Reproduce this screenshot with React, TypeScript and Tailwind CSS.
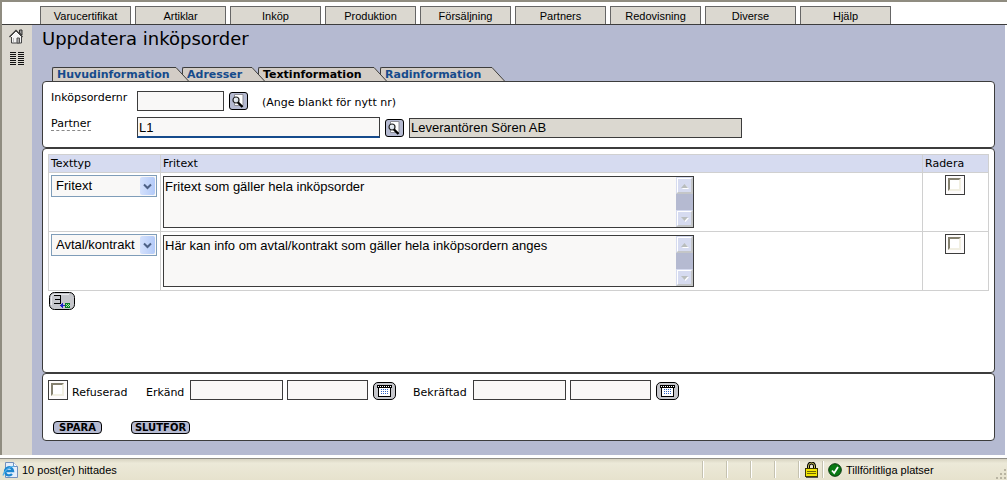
import { useState } from "react";
import type { ReactNode } from "react";
import clsx from "clsx";

const MENU = [
  "Varucertifikat",
  "Artiklar",
  "Inköp",
  "Produktion",
  "Försäljning",
  "Partners",
  "Redovisning",
  "Diverse",
  "Hjälp",
];

// earlier tabs lie over the left edge of the next one
const TABS = [
  { label: "Huvudinformation", className: "z-40 w-[124px]" },
  { label: "Adresser", className: "z-30 w-[70px]" },
  { label: "Textinformation", className: "z-20 w-[116px]" },
  { label: "Radinformation", className: "z-10 w-[112px]" },
];

const TEXT_TYPES = ["Fritext", "Avtal/kontrakt"];

const ROWS = [
  { id: 1, type: "Fritext", text: "Fritext som gäller hela inköpsorder" },
  {
    id: 2,
    type: "Avtal/kontrakt",
    text: "Här kan info om avtal/kontrakt som gäller hela inköpsordern anges",
  },
];

export default function App() {
  return (
    <div className="flex min-h-screen flex-col border-l-2 border-[#8f8c80] bg-white font-['DejaVu_Sans',Verdana,sans-serif] text-[11px] leading-[14px] text-black">
      <MenuBar />
      <div className="mr-[2px] flex flex-1">
        <Sidebar />
        <main className="flex flex-1 flex-col bg-[#b5bad1] px-[10px] pt-[2px] pb-[14px]">
          <h1 className="text-[18px] leading-[24px]">Uppdatera inköpsorder</h1>
          <Tabs />
          <OrderPanel />
          <TextPanel />
          <ConfirmPanel />
        </main>
      </div>
      <StatusBar />
    </div>
  );
}

function MenuBar() {
  return (
    <nav className="flex gap-1 border-t-2 border-b border-t-[#8f8c80] border-b-[#3c3c3c] pt-1 pl-[38px] font-['Liberation_Sans',Arial,sans-serif]">
      {MENU.map((item) => (
        <button
          key={item}
          type="button"
          className="h-[18px] w-[91px] border border-b-0 border-[#666] bg-[#dbd8d0] text-center leading-[18px]"
        >
          {item}
        </button>
      ))}
    </nav>
  );
}

function Sidebar() {
  return (
    <aside className="flex w-[30px] flex-col items-center gap-2 bg-[#dbd8d0] pt-1 pr-[2px]">
      <button type="button" aria-label="Hem">
        <HomeIcon />
      </button>
      <button type="button" aria-label="Lista">
        <ListIcon />
      </button>
    </aside>
  );
}

function Tabs() {
  const [active, setActive] = useState("Textinformation");

  return (
    <div role="tablist" className="mt-4 flex pl-[10px]">
      {TABS.map((tab) => (
        <button
          key={tab.label}
          type="button"
          role="tab"
          aria-selected={tab.label === active}
          onClick={() => setActive(tab.label)}
          className={clsx(
            "relative -mr-[7px] box-content flex h-[14px] pr-[13px] font-bold",
            tab.className,
            tab.label === active ? "text-black" : "text-[#164b8c]"
          )}
        >
          <span className="h-[14px] flex-1 rounded-tl-[2px] border-t border-l border-[#3c3c3c] bg-[#d3cdc6] pl-1 text-left whitespace-nowrap">
            {tab.label}
          </span>
          <svg className="-mr-[13px] shrink-0" width="14" height="14" viewBox="0 0 14 14">
            <path d="M0 0h1L14 14H0z" fill="#d3cdc6" />
            <path d="M0 .5h1L13.5 14" fill="none" stroke="#3c3c3c" />
          </svg>
        </button>
      ))}
    </div>
  );
}

function Panel({ className, children }: { className?: string; children: ReactNode }) {
  return (
    <section className={clsx("rounded-[4px] border border-[#3c3c3c] bg-white", className)}>
      {children}
    </section>
  );
}

function OrderPanel() {
  return (
    <Panel className="grid grid-cols-[86px_1fr] gap-y-[6px] px-2 py-[9px]">
      <label htmlFor="order-no">Inköpsordernr</label>
      <div className="flex items-center">
        <Field id="order-no" className="w-[87px]" />
        <SearchButton label="Sök inköpsorder" />
        <span className="mt-1 ml-[14px]">(Ange blankt för nytt nr)</span>
      </div>
      <label htmlFor="partner">
        <span className="border-b border-dashed border-[#888]">Partner</span>
      </label>
      <div className="flex items-center">
        <input
          id="partner"
          defaultValue="L1"
          className="h-[21px] w-[243px] border border-b-2 border-[#3c3c3c] border-b-[#164b8c] bg-[#f9f8f7] px-px font-['Liberation_Sans',Arial,sans-serif] text-[13px]"
        />
        <SearchButton label="Sök partner" />
        <input
          readOnly
          aria-label="Partnernamn"
          defaultValue="Leverantören Sören AB"
          className="ml-[5px] h-[20px] w-[333px] border border-[#3c3c3c] bg-[#dbd8d0] px-px font-['Liberation_Sans',Arial,sans-serif] text-[13px]"
        />
      </div>
    </Panel>
  );
}

function TextPanel() {
  return (
    <Panel className="flex-1 px-[5px] pt-[5px] pb-4">
      <table className="w-full border-collapse">
        <thead>
          <tr className="h-[18px] bg-[#d6dbf0] text-left">
            <th className="w-[112px] border border-[#d0d0d0] px-[2px] py-px font-normal">Texttyp</th>
            <th className="border border-[#d0d0d0] px-[2px] py-px font-normal">Fritext</th>
            <th className="w-[66px] border border-[#d0d0d0] px-[2px] py-px font-normal">Radera</th>
          </tr>
        </thead>
        <tbody>
          {ROWS.map((row) => (
            <tr key={row.id} className="h-[59px] align-top">
              <td className="border border-[#d0d0d0] px-[2px] pt-[2px]">
                <TypeSelect value={row.type} />
              </td>
              <td className="border border-[#d0d0d0] px-[2px] pt-[3px]">
                <TextBox value={row.text} />
              </td>
              <td className="border border-[#d0d0d0] pt-[2px] pr-[2px]">
                <div className="flex justify-center">
                  <Checkbox label={`Radera rad ${row.id}`} />
                </div>
              </td>
            </tr>
          ))}
        </tbody>
      </table>
      <button type="button" aria-label="Lägg till rad" className="mt-px ml-px block">
        <AddRowIcon />
      </button>
    </Panel>
  );
}

function ConfirmPanel() {
  return (
    <Panel className="py-[6px] pr-2 pl-[5px]">
      <div className="flex h-5 items-end">
        <Checkbox id="refused" />
        <label htmlFor="refused" className="ml-1 w-[74px]">
          Refuserad
        </label>
        <label htmlFor="approved" className="w-[44px]">
          Erkänd
        </label>
        <Field id="approved" className="w-[93px]" />
        <Field label="Erkänd tid" className="ml-1 w-[81px]" />
        <CalendarButton label="Välj datum för erkänd" />
        <label htmlFor="confirmed" className="ml-[17px] w-[60px]">
          Bekräftad
        </label>
        <Field id="confirmed" className="w-[93px]" />
        <Field label="Bekräftad tid" className="ml-1 w-[81px]" />
        <CalendarButton label="Välj datum för bekräftad" />
      </div>
      <div className="mt-[21px] flex gap-[29px] pl-[5px]">
        <ActionButton className="w-[49px]">SPARA</ActionButton>
        <ActionButton className="w-[59px]">SLUTFÖR</ActionButton>
      </div>
    </Panel>
  );
}

function Field({ id, label, className }: { id?: string; label?: string; className: string }) {
  return (
    <input
      id={id}
      aria-label={label}
      className={clsx("h-5 border border-[#3c3c3c] bg-[#f9f8f7] px-px", className)}
    />
  );
}

function Checkbox({ id, label }: { id?: string; label?: string }) {
  return (
    <span className="flex size-5 shrink-0 border border-[#3c3c3c] bg-[#fdfbfb] pt-[2px] pl-[2px]">
      <input
        id={id}
        type="checkbox"
        aria-label={label}
        className="size-[13px] appearance-none border-2 border-t-[#85816f] border-r-[#f1efe2] border-b-[#f1efe2] border-l-[#85816f] bg-white checked:bg-[#3c3c3c]"
      />
    </span>
  );
}

function TypeSelect({ value }: { value: string }) {
  return (
    <div className="relative w-[106px]">
      <select
        aria-label="Texttyp"
        defaultValue={value}
        className="block h-[22px] w-full appearance-none border border-[#7f9db9] bg-[#f9f8f7] pl-1 font-['Liberation_Sans',Arial,sans-serif] text-[13px]"
      >
        {TEXT_TYPES.map((type) => (
          <option key={type}>{type}</option>
        ))}
      </select>
      <span className="pointer-events-none absolute top-[2px] right-[2px] flex h-[18px] w-[15px] items-center justify-center rounded-[2px] bg-linear-to-r from-[#d4e1fc] to-[#b3caf8]">
        <svg width="9" height="7" viewBox="0 0 9 7">
          <path d="M1 1.5l3.5 3.5L8 1.5" fill="none" stroke="#4d6185" strokeWidth="2" />
        </svg>
      </span>
    </div>
  );
}

function TextBox({ value }: { value: string }) {
  return (
    <div className="flex h-[52px] w-[531px] border border-[#3c3c3c]">
      <textarea
        aria-label="Fritext"
        defaultValue={value}
        className="h-full flex-1 resize-none overflow-hidden bg-[#f9f8f7] px-px pt-[2px] font-['Liberation_Sans',Arial,sans-serif] text-[13px] leading-[15px]"
      />
      <div className="flex w-[17px] flex-col justify-between bg-[#b5bad1]">
        <ScrollArrow points="3,9 10,9 6.5,5" />
        <ScrollArrow points="3,5 10,5 6.5,9" />
      </div>
    </div>
  );
}

function ScrollArrow({ points }: { points: string }) {
  return (
    <span className="flex size-[17px] border border-t-[#d6dbf0] border-r-[#c4c6c8] border-b-[#c4c6c8] border-l-[#d6dbf0]">
      <svg
        className="border border-t-white border-r-[#c4c6c8] border-b-[#c4c6c8] border-l-white bg-[#d6dbf0]"
        width="15"
        height="15"
        viewBox="0 0 13 13"
      >
        <polygon points={points} transform="translate(1 1)" fill="#fff" />
        <polygon points={points} fill="#b9bdbd" />
      </svg>
    </span>
  );
}

function SearchButton({ label }: { label: string }) {
  return (
    <button
      type="button"
      aria-label={label}
      className="ml-[5px] flex h-[18px] w-[19px] items-center justify-center rounded-[3px] border border-black bg-[#b5bad1]"
    >
      <svg width="17" height="16" viewBox="0 0 17 16">
        <path d="M4.5 1.500h8.500v11H4.500z" fill="#fff" stroke="#8c8c94" />
        <circle cx="6" cy="7" r="3" fill="#dfe6ee" stroke="#222" strokeWidth="1.200" />
        <path d="M8 9.500l4.500 4.500" stroke="#000" strokeWidth="2.400" />
        <path d="M4.500 7l1.500-1.500" stroke="#fff" />
      </svg>
    </button>
  );
}

function CalendarButton({ label }: { label: string }) {
  return (
    <button
      type="button"
      aria-label={label}
      className="ml-[5px] flex h-[18px] w-[23px] items-center justify-center rounded-[5px] border border-black bg-[#c6c7cc]"
    >
      <svg width="15" height="12" viewBox="0 0 15 12" shapeRendering="crispEdges">
        <path d="M0 0h15v3H0z" fill="#000" />
        <path d="M1 1.500h13" stroke="#fff" strokeDasharray="1 1" />
        <path d="M1 3h13v9H1z" fill="#000" />
        <path d="M2 3h11v8H2z" fill="#fff" />
        <path d="M4 4.500h8M4 6.500h8M4 8.500h8" stroke="#2f62c4" strokeDasharray="1 1" />
      </svg>
    </button>
  );
}

function ActionButton({ className, children }: { className: string; children: ReactNode }) {
  return (
    <button
      type="button"
      className={clsx(
        "h-[13px] rounded-[4px] border border-black bg-[#b5bad1] text-center text-[10px] leading-[11px] font-bold",
        className
      )}
    >
      {children}
    </button>
  );
}

function AddRowIcon() {
  return (
    <svg width="26" height="18" viewBox="0 0 26 18">
      <rect x=".5" y=".5" width="25" height="17" rx="5" fill="#c6c7cc" stroke="#000" />
      <path d="M2.500 13V5q0-2.500 2.500-2.500h15" fill="none" stroke="#e8e8ec" />
      <g shapeRendering="crispEdges">
        <path d="M5 3.500h7M6 7.500h6M5 11.500h7M11.500 3v9" fill="none" stroke="#000" />
        <path d="M11 13.500h5" stroke="#2020c8" />
        <path d="M13.500 11v5" stroke="#2020c8" />
        <path d="M12.500 12v3" stroke="#2020c8" />
        <path d="M16 11h5v5h-5z" fill="#0b7a26" />
        <path d="M17 12.500h3M18 13.500h3M17 14.500h3" stroke="#a5f0a5" strokeDasharray="1 1" />
      </g>
    </svg>
  );
}

function HomeIcon() {
  return (
    <svg width="15" height="15" viewBox="0 0 15 15">
      <path d="M10.500 1h2.500v5l-2.500-2z" fill="#999" stroke="#333" />
      <path d="M2.500 7.500L7 3l5.500 5v6h-10z" fill="#f4f4f4" stroke="#444" />
      <path d="M.5 8L7 1.500 13.500 8" fill="none" stroke="#333" strokeWidth="1.400" />
      <path d="M2 8L7 3l5 5" fill="none" stroke="#fff" />
      <path d="M8 9h2.500v5H8z" fill="#aaa" stroke="#555" />
      <path d="M4.500 9v4" stroke="#bbb" />
    </svg>
  );
}

function ListIcon() {
  return (
    <svg width="15" height="13" viewBox="0 0 15 13" shapeRendering="crispEdges">
      <path d="M3.500 0v13M11.500 0v13" stroke="#111" strokeWidth="6" strokeDasharray="1 1" />
    </svg>
  );
}

function StatusBar() {
  return (
    <footer className="-ml-[2px] flex h-[25px] items-stretch border-t-[3px] border-white font-['Liberation_Sans',Tahoma,sans-serif]">
      <div className="flex flex-1 items-stretch border-t border-[#8f8d86] bg-linear-to-b from-[#d8d4c2] via-[#ece9d8] via-20% to-[#e6e2cd]">
        <div className="flex flex-1 items-center gap-1 pl-[2px]">
          <BrowserIcon />
          <span>10 post(er) hittades</span>
        </div>
        {[0, 1, 2, 3].map((n) => (
          <StatusDivider key={n} className="w-6" />
        ))}
        <StatusDivider className="w-6">
          <LockIcon />
        </StatusDivider>
        <StatusDivider className="w-[185px] gap-1">
          <TrustedIcon />
          <span className="flex-1">Tillförlitliga platser</span>
          <ResizeGrip />
        </StatusDivider>
      </div>
    </footer>
  );
}

function StatusDivider({ className, children }: { className: string; children?: ReactNode }) {
  return (
    <div className={clsx("flex items-center", className)}>
      <span className="h-[17px] w-[2px] shrink-0 border-l border-[#c5c2b0] bg-white" />
      {children}
    </div>
  );
}

function BrowserIcon() {
  return (
    <svg width="16" height="16" viewBox="0 0 16 16">
      <path d="M3.500.5h8l4 4v11h-12z" fill="#e4eefb" stroke="#7391bd" />
      <path d="M11.500.5v4h4" fill="#fff" stroke="#7391bd" />
      <path d="M3 9h8a4 4 0 1 0-1 3" fill="none" stroke="#1c86cf" strokeWidth="2.400" />
      <path d="M1 13.500C2 9 7 4.500 12.500 4" fill="none" stroke="#4db0ea" strokeWidth="1.200" />
    </svg>
  );
}

function LockIcon() {
  return (
    <svg className="ml-[5px]" width="13" height="16" viewBox="0 0 13 16">
      <path d="M3.500 8V4a3 3 0 0 1 6 0v4" fill="none" stroke="#000" strokeWidth="3" />
      <path d="M3.500 8V4a3 3 0 0 1 6 0v4" fill="none" stroke="#c9c45a" />
      <rect x=".5" y="6.500" width="12" height="8" fill="#f2e600" stroke="#3d3900" />
      <path d="M2 9.500h9M2 11.500h9" stroke="#6e6800" />
      <path d="M1 15.500h12" stroke="#555" />
    </svg>
  );
}

function TrustedIcon() {
  return (
    <svg className="shrink-0" width="14" height="14" viewBox="0 0 14 14">
      <circle cx="7" cy="7" r="6.300" fill="#0a7a14" stroke="#06350a" />
      <path d="M4 7.500l2.200 2.500L10 4" fill="none" stroke="#fff" strokeWidth="1.800" />
    </svg>
  );
}

function ResizeGrip() {
  return (
    <svg className="self-end" width="12" height="12" viewBox="0 0 12 12" shapeRendering="crispEdges">
      <path d="M9 1h2v2H9zM5 5h2v2H5zM9 5h2v2H9zM1 9h2v2H1zM5 9h2v2H5zM9 9h2v2H9z" fill="#b8b4a2" />
    </svg>
  );
}
